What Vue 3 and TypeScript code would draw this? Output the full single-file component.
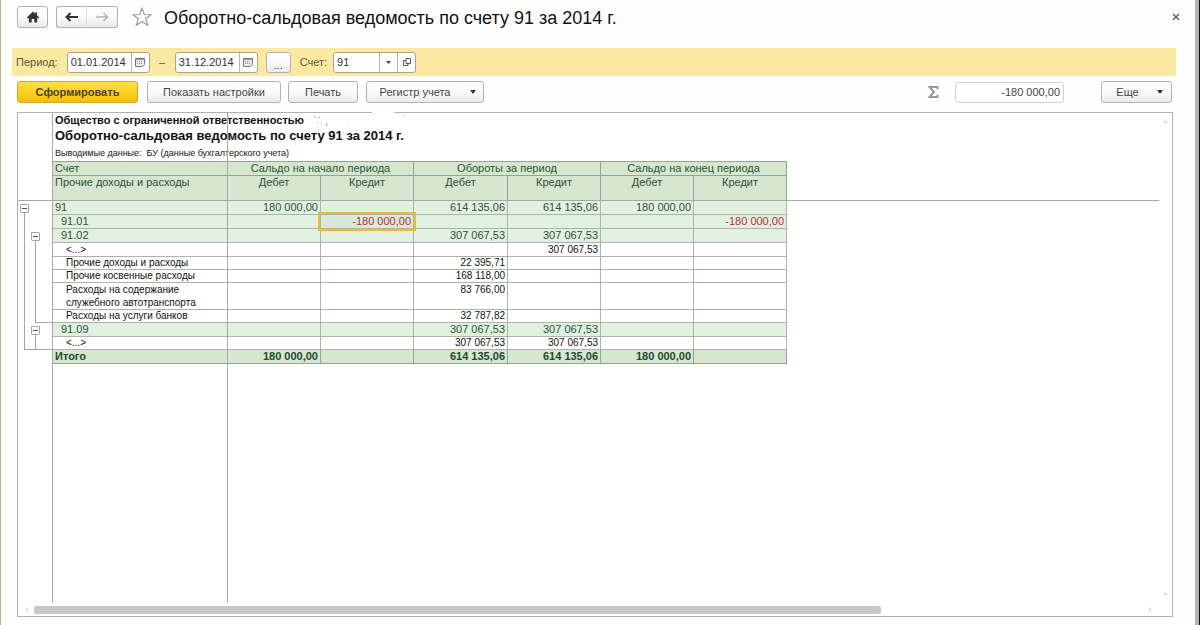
<script setup lang="ts">
import { ref } from 'vue'

type Kind = 'group' | 'leaf' | 'total'
type Mark = '' | 'toggle' | 'line' | 'end'

interface Row {
  name: string
  kind: Kind
  indent: number
  size: string
  outer: Mark
  inner: Mark
  cells: string[]
}

const periodFrom = ref('01.01.2014')
const periodTo = ref('31.12.2014')
const account = ref('91')
const sum = ref('-180 000,00')

const groups = ['Сальдо на начало периода', 'Обороты за период', 'Сальдо на конец периода']
const sides = ['Дебет', 'Кредит', 'Дебет', 'Кредит', 'Дебет', 'Кредит']

const rows: Row[] = [
  { name: '91', kind: 'group', indent: 0, size: 'h14', outer: 'toggle', inner: '', cells: ['180 000,00', '', '614 135,06', '614 135,06', '180 000,00', ''] },
  { name: '91.01', kind: 'group', indent: 1, size: 'h14', outer: 'line', inner: '', cells: ['', '-180 000,00', '', '', '', '-180 000,00'] },
  { name: '91.02', kind: 'group', indent: 1, size: 'h14', outer: 'line', inner: 'toggle', cells: ['', '', '307 067,53', '307 067,53', '', ''] },
  { name: '<...>', kind: 'leaf', indent: 2, size: 'h14', outer: 'line', inner: 'line', cells: ['', '', '', '307 067,53', '', ''] },
  { name: 'Прочие доходы и расходы', kind: 'leaf', indent: 2, size: 'h13', outer: 'line', inner: 'line', cells: ['', '', '22 395,71', '', '', ''] },
  { name: 'Прочие косвенные расходы', kind: 'leaf', indent: 2, size: 'h13', outer: 'line', inner: 'line', cells: ['', '', '168 118,00', '', '', ''] },
  { name: 'Расходы на содержание служебного автотранспорта', kind: 'leaf', indent: 2, size: 'h27', outer: 'line', inner: 'line', cells: ['', '', '83 766,00', '', '', ''] },
  { name: 'Расходы на услуги банков', kind: 'leaf', indent: 2, size: 'h13', outer: 'line', inner: 'end', cells: ['', '', '32 787,82', '', '', ''] },
  { name: '91.09', kind: 'group', indent: 1, size: 'h14', outer: 'line', inner: 'toggle', cells: ['', '', '307 067,53', '307 067,53', '', ''] },
  { name: '<...>', kind: 'leaf', indent: 2, size: 'h13', outer: 'end', inner: 'end', cells: ['', '', '307 067,53', '307 067,53', '', ''] },
  { name: 'Итого', kind: 'total', indent: 0, size: 'h14', outer: '', inner: '', cells: ['180 000,00', '', '614 135,06', '614 135,06', '180 000,00', ''] },
]

const isSelected = (r: number, c: number): boolean => r === 1 && c === 1
</script>

<template>
  <main class="window">
    <header class="titlebar">
      <button class="btn home" type="button" aria-label="Начальная страница">
        <svg width="14" height="12" viewBox="0 0 14 12"><path d="M7 0.5 0.8 6.4 1.8 7.4 2.8 6.6V11.5H5.7V8H8.3V11.5H11.2V6.6L12.2 7.4 13.2 6.4 11 4.2V1.2H9.4V2.7Z" fill="#333" /></svg>
      </button>
      <div class="nav">
        <button class="btn" type="button" aria-label="Назад">
          <svg width="14" height="10" viewBox="0 0 14 10"><path d="M5.5 1 1.5 5 5.5 9M1.8 5H13" fill="none" stroke="#333" stroke-width="2" /></svg>
        </button>
        <button class="btn" type="button" aria-label="Вперед">
          <svg width="14" height="10" viewBox="0 0 14 10"><path d="M8.5 1 12.5 5 8.5 9M12.2 5H1" fill="none" stroke="#b5b5b5" stroke-width="1.5" /></svg>
        </button>
      </div>
      <button class="plain star" type="button" aria-label="В избранное">
        <svg width="20" height="20" viewBox="0 0 20 20"><path d="M10 1.3 12.3 7.5 19 7.7 13.7 11.8 15.7 18.4 10 14.5 4.3 18.4 6.3 11.8 1 7.7 7.7 7.5Z" fill="#fff" stroke="#999" stroke-width="1.2" /></svg>
      </button>
      <h1>Оборотно-сальдовая ведомость по счету 91 за 2014 г.</h1>
      <button class="plain close" type="button" aria-label="Закрыть">
        <svg width="8" height="8" viewBox="0 0 8 8"><path d="M1 1 7 7M7 1 1 7" stroke="#555" stroke-width="1.3" /></svg>
      </button>
    </header>

    <section class="period">
      <label for="from">Период:</label>
      <div class="field date">
        <input id="from" v-model="periodFrom" type="text" />
        <button type="button" aria-label="Выбрать начало">
          <svg width="10" height="9" viewBox="0 0 10 9"><path d="M.5.5H9.5V6.5L7.5 8.5H.5Z" fill="#eee" stroke="#777" /><path d="M1 1.5H9" stroke="#999" /><path d="M2 3.5H8M2 5.5H8" stroke="#888" stroke-dasharray="1 1" /></svg>
        </button>
      </div>
      <label class="dash" for="to">–</label>
      <div class="field date">
        <input id="to" v-model="periodTo" type="text" />
        <button type="button" aria-label="Выбрать конец">
          <svg width="10" height="9" viewBox="0 0 10 9"><path d="M.5.5H9.5V6.5L7.5 8.5H.5Z" fill="#eee" stroke="#777" /><path d="M1 1.5H9" stroke="#999" /><path d="M2 3.5H8M2 5.5H8" stroke="#888" stroke-dasharray="1 1" /></svg>
        </button>
      </div>
      <button class="btn more" type="button">...</button>
      <label for="account">Счет:</label>
      <div class="field account">
        <input id="account" v-model="account" type="text" />
        <button type="button" aria-label="Список счетов">
          <svg width="5" height="3" viewBox="0 0 5 3"><path d="M0 0H5L2.5 3Z" fill="#444" /></svg>
        </button>
        <button type="button" aria-label="Открыть счет">
          <svg width="8" height="8" viewBox="0 0 8 8"><path d="M3 .5H7.5V5.5H3ZM3 2.5H.5V7.5H5V5.5" fill="none" stroke="#555" /></svg>
        </button>
      </div>
    </section>

    <section class="commands">
      <button class="btn primary" type="button">Сформировать</button>
      <button class="btn settings" type="button">Показать настройки</button>
      <button class="btn print" type="button">Печать</button>
      <button class="btn register" type="button">
        Регистр учета
        <svg width="6" height="4" viewBox="0 0 6 4"><path d="M0 0H6L3 4Z" fill="#333" /></svg>
      </button>
      <label class="sigma" for="sum" aria-label="Сумма">
        <svg width="11" height="12" viewBox="0 0 11 12"><path d="M9.5 3.2V1H1.5L6 6 1.5 11H9.5V8.8" fill="none" stroke="#999" stroke-width="2" /></svg>
      </label>
      <input id="sum" v-model="sum" class="sum" type="text" readonly />
      <button class="btn else" type="button">
        Еще
        <svg width="6" height="4" viewBox="0 0 6 4"><path d="M0 0H6L3 4Z" fill="#333" /></svg>
      </button>
    </section>

    <section class="sheet">
      <div class="canvas">
        <div class="intro">
          <p class="org">Общество с ограниченной ответственностью</p>
          <h2>Оборотно-сальдовая ведомость по счету 91 за 2014 г.</h2>
          <p class="basis">Выводимые данные:&nbsp; БУ (данные бухгалтерского учета)</p>
        </div>
        <table>
          <colgroup>
            <col class="c-tree" />
            <col class="c-name" />
            <col class="c-odd" />
            <col class="c-odd" />
            <col class="c-even" />
            <col class="c-odd" />
            <col class="c-odd" />
            <col class="c-odd" />
          </colgroup>
          <thead>
            <tr class="h14 first">
              <td class="tree"></td>
              <th class="name" scope="col">Счет</th>
              <th v-for="g in groups" :key="g" colspan="2" scope="colgroup">{{ g }}</th>
            </tr>
            <tr class="h25">
              <td class="tree"></td>
              <th class="name" scope="col">Прочие доходы и расходы</th>
              <th v-for="(s, i) in sides" :key="i" scope="col">{{ s }}</th>
            </tr>
          </thead>
          <tbody>
            <tr v-for="(row, r) in rows" :key="r" :class="[row.kind, row.size]">
              <td class="tree">
                <span v-if="row.outer" class="rail outer" :class="row.outer"></span>
                <span v-if="row.inner" class="rail inner" :class="row.inner"></span>
                <button v-if="row.outer === 'toggle'" class="toggle" type="button" :aria-label="'Свернуть ' + row.name"></button>
                <button v-if="row.inner === 'toggle'" class="toggle nested" type="button" :aria-label="'Свернуть ' + row.name"></button>
              </td>
              <th class="name" :class="'indent' + row.indent" scope="row">{{ row.name }}</th>
              <td v-for="(cell, c) in row.cells" :key="c" class="num" :class="{ negative: cell.startsWith('-'), selected: isSelected(r, c) }">{{ cell }}</td>
            </tr>
          </tbody>
        </table>
        <span class="freeze tree-edge"></span>
        <span class="freeze name-edge"></span>
        <span class="freeze head-edge"></span>
        <svg class="smudge" width="100" height="18" viewBox="0 0 100 18">
          <path d="M60 0H82V2H60Z" fill="#fff" />
          <path d="M2 5H4M6 5.5H8M5 11H6M9 11H10M14 12H15V14M35 11H36M91 4H92" fill="none" stroke="#aaa" />
        </svg>
      </div>
      <div class="vscroll">
        <svg width="5" height="3" viewBox="0 0 5 3"><path d="M0 3 2.5 0 5 3Z" fill="#ddd" /></svg>
        <svg width="5" height="3" viewBox="0 0 5 3"><path d="M0 0 2.5 3 5 0Z" fill="#ddd" /></svg>
      </div>
      <div class="hscroll">
        <svg width="3" height="5" viewBox="0 0 3 5"><path d="M3 0 0 2.5 3 5Z" fill="#ddd" /></svg>
        <div class="track"><div class="thumb"></div></div>
        <svg width="3" height="5" viewBox="0 0 3 5"><path d="M0 0 3 2.5 0 5Z" fill="#ddd" /></svg>
      </div>
    </section>
  </main>
</template>

<style>
body {
  margin: 0;
  background: #fff;
}
</style>

<style scoped>
* {
  box-sizing: border-box;
}

.window {
  display: flex;
  flex-direction: column;
  min-height: 100vh;
  padding-bottom: 8px;
  border-left: 1px solid #bdb47c;
  border-right: 1px solid #111;
  box-shadow: inset -4px 0 #b4b4b8;
  background: #fefefe;
  color: #444;
  font: 11px/14px "Liberation Sans", Arial, sans-serif;
}

button,
input {
  margin: 0;
  padding: 0;
  color: inherit;
  font: inherit;
}

svg {
  display: block;
  flex: none;
}

.btn {
  display: flex;
  align-items: center;
  justify-content: center;
  height: 22px;
  border: 1px solid #b2b2b2;
  border-radius: 3px;
  background: linear-gradient(#fff, #fafafa 50%, #ebebeb);
}

.plain {
  border: 0;
  background: none;
}

.titlebar {
  display: flex;
  align-items: center;
  height: 34px;
  margin-bottom: 14px;
  padding: 0 19px 0 16px;
}

.home {
  width: 31px;
}

.nav {
  display: flex;
  margin: 0 14px 0 8px;
}

.nav .btn {
  width: 31px;
}

.nav .btn:first-child {
  border-right-color: #ddd;
  border-radius: 3px 0 0 3px;
}

.nav .btn:last-child {
  border-left: 0;
  border-radius: 0 3px 3px 0;
}

h1 {
  flex: 1;
  margin: 0 0 0 12px;
  padding-top: 2px;
  color: #111;
  font-size: 18px;
  font-weight: 400;
  line-height: 22px;
}

.period {
  display: flex;
  align-items: center;
  height: 28px;
  margin: 0 23px 0 11px;
  padding: 0 5px 0 4px;
  background: #fae9a0;
  color: #5e573c;
}

.period label {
  flex: none;
}

.field {
  display: flex;
  height: 21px;
  border: 1px solid #aaa592;
  border-radius: 3px;
  background: #fff;
  color: #333;
}

.field input {
  flex: 1;
  min-width: 0;
  padding-left: 3px;
  border: 0;
  border-radius: 3px;
  background: none;
}

.field button {
  display: flex;
  align-items: center;
  justify-content: center;
  width: 18px;
  border: 0;
  border-left: 1px solid #b5b5b5;
  background: none;
}

.date {
  width: 83px;
}

.date:first-of-type {
  margin-left: 9px;
}

.period .dash {
  width: 25px;
  text-align: center;
}

.period .more {
  align-items: flex-end;
  width: 25px;
  height: 21px;
  margin: 0 9px 0 8px;
  color: #333;
}

.account {
  width: 83px;
  margin-left: 6px;
}

.commands {
  display: flex;
  align-items: center;
  height: 22px;
  margin: 5px 27px 9px 16px;
}

.primary {
  width: 121px;
  margin-right: 9px;
  border-color: #d0a92b;
  background: linear-gradient(#ffe04a, #fbcd1c 60%, #f2bd10);
  color: #4a431f;
  font-weight: 700;
}

.settings {
  width: 134px;
  margin-right: 7px;
}

.print {
  width: 70px;
  margin-right: 8px;
}

.register {
  gap: 20px;
  width: 118px;
  padding-left: 6px;
}

.sigma {
  margin-left: auto;
}

.sum {
  width: 109px;
  height: 21px;
  margin: 0 37px 0 16px;
  padding-right: 3px;
  border: 1px solid #d2d2d2;
  border-radius: 3px;
  background: #fff;
  text-align: right;
}

.else {
  gap: 18px;
  width: 71px;
  padding-left: 6px;
}

.sheet {
  display: grid;
  flex: 1;
  grid-template-columns: minmax(0, 1fr) 13px;
  grid-template-rows: 1fr 13px;
  margin: 0 26px 0 16px;
  border: 1px solid #b0b0b0;
  background: #fff;
}

.canvas {
  position: relative;
}

.intro {
  padding-left: 37px;
  color: #111;
}

.intro p,
.intro h2 {
  margin: 0;
}

.org {
  font-weight: 700;
}

.intro h2 {
  font-size: 13px;
  line-height: 18px;
}

.basis {
  font-size: 9px;
  line-height: 16px;
}

table {
  width: 769px;
  border-spacing: 0;
  table-layout: fixed;
}

.c-tree {
  width: 35px;
}

.c-name {
  width: 175px;
}

.c-odd {
  width: 93px;
}

.c-even {
  width: 94px;
}

th,
td {
  padding: 0 2px;
  border-right: 1px solid #a9b6a7;
  border-bottom: 1px solid #a9b6a7;
  font-weight: 400;
  line-height: 13px;
  text-align: center;
  vertical-align: top;
}

thead th {
  border-color: #94a491;
  background: #d7e6cf;
  color: #27543a;
}

.first th {
  border-top: 1px solid #94a491;
}

.first th,
.first td {
  height: 15px;
}

.name {
  text-align: left;
}

.indent1 {
  padding-left: 8px;
}

.indent2 {
  padding-left: 13px;
  padding-right: 14px;
}

.num {
  text-align: right;
}

.h13 {
  height: 13px;
}

.h14 {
  height: 14px;
}

.h25 {
  height: 25px;
}

.h27 {
  height: 27px;
}

.h13 > * {
  line-height: 12px;
}

.group > * {
  background: #e2f1df;
  color: #27543a;
}

.leaf > * {
  color: #111;
  font-size: 10px;
}

.total > * {
  border-color: #94a491;
  background: #d7e6cf;
  color: #1d4a30;
  font-weight: 700;
}

.group > .negative {
  color: #b3303a;
}

.group > .selected {
  position: relative;
  background: #dae8d8;
}

.selected::after {
  position: absolute;
  inset: -3px;
  border: 2px solid #e6bd3e;
  content: "";
}

tr > .tree {
  position: relative;
  padding: 0;
  border: 0;
  background: none;
}

.rail {
  position: absolute;
  top: 0;
  bottom: 0;
  border-left: 1px solid #a5a5a5;
}

.rail.outer {
  left: 6px;
  right: 0;
}

.rail.inner {
  left: 17px;
  right: 0;
}

.rail.end {
  border-bottom: 1px solid #a5a5a5;
}

.rail.toggle {
  top: 12px;
}

button.toggle {
  position: absolute;
  top: 3px;
  left: 2px;
  display: flex;
  align-items: center;
  justify-content: center;
  width: 9px;
  height: 9px;
  border: 1px solid #a5a5a5;
  border-radius: 1px;
  background: #fff;
}

button.toggle::before {
  width: 5px;
  height: 1px;
  background: #555;
  content: "";
}

button.nested {
  left: 13px;
}

.freeze {
  position: absolute;
  background: #a8a8a8;
}

.tree-edge,
.name-edge {
  top: 0;
  bottom: 0;
  width: 1px;
}

.tree-edge {
  left: 34px;
}

.name-edge {
  left: 209px;
}

.head-edge {
  top: 87px;
  left: 0;
  right: 0;
  height: 1px;
}

.smudge {
  position: absolute;
  top: -1px;
  left: 294px;
}

.vscroll {
  display: flex;
  flex-direction: column;
  align-items: center;
  justify-content: space-between;
  padding: 7px 0;
}

.hscroll {
  display: flex;
  grid-column: 1 / -1;
  align-items: center;
  padding: 0 20px 0 7px;
}

.track {
  flex: 1;
  margin: 0 0 0 6px;
}

.thumb {
  width: 76%;
  height: 8px;
  border-radius: 2px;
  background: #c9c8c9;
}
</style>
